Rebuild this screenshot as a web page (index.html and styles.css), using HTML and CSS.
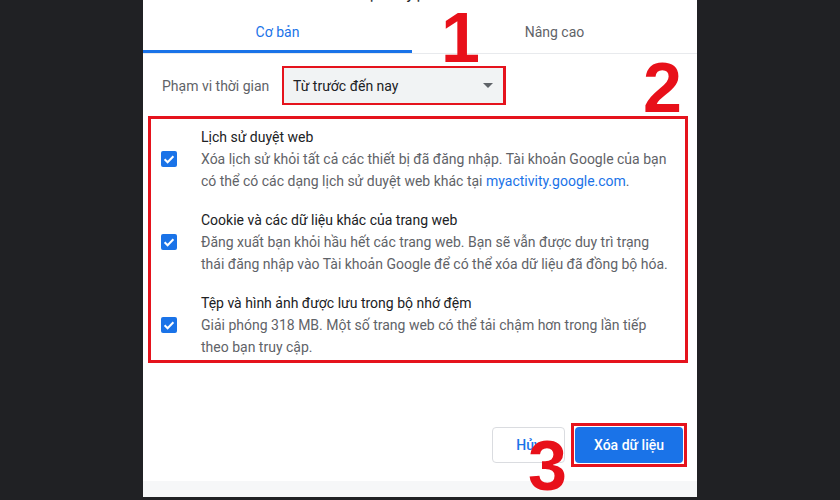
FILE: index.html
```html
<!DOCTYPE html>
<html lang="vi">
<head>
<meta charset="utf-8">
<title>Xóa dữ liệu duyệt web</title>
<link rel="stylesheet" href="styles.css">
</head>
<body>
<div class="dialog">
  <div class="title">Xóa dữ liệu duyệt web</div>
  <div class="tabs">
    <div class="tab tab-active">Cơ bản</div>
    <div class="tab">Nâng cao</div>
  </div>
  <div class="time-row">
    <span class="time-label">Phạm vi thời gian</span>
    <div class="hl hl-select">
      <div class="select">
        <span>Từ trước đến nay</span>
        <span class="caret"></span>
      </div>
    </div>
  </div>
  <div class="hl hl-list">
    <div class="item">
      <span class="cb"><svg viewBox="0 0 16 16" width="16" height="16"><path d="M3.6 8.2l3 3 5.8-6" fill="none" stroke="#fff" stroke-width="2"/></svg></span>
      <div class="item-text">
        <div class="item-title">Lịch sử duyệt web</div>
        <div class="item-desc">Xóa lịch sử khỏi tất cả các thiết bị đã đăng nhập. Tài khoản Google của bạn<br>có thể có các dạng lịch sử duyệt web khác tại <span class="link">myactivity.google.com</span>.</div>
      </div>
    </div>
    <div class="item">
      <span class="cb"><svg viewBox="0 0 16 16" width="16" height="16"><path d="M3.6 8.2l3 3 5.8-6" fill="none" stroke="#fff" stroke-width="2"/></svg></span>
      <div class="item-text">
        <div class="item-title">Cookie và các dữ liệu khác của trang web</div>
        <div class="item-desc">Đăng xuất bạn khỏi hầu hết các trang web. Bạn sẽ vẫn được duy trì trạng<br>thái đăng nhập vào Tài khoản Google để có thể xóa dữ liệu đã đồng bộ hóa.</div>
      </div>
    </div>
    <div class="item">
      <span class="cb"><svg viewBox="0 0 16 16" width="16" height="16"><path d="M3.6 8.2l3 3 5.8-6" fill="none" stroke="#fff" stroke-width="2"/></svg></span>
      <div class="item-text">
        <div class="item-title">Tệp và hình ảnh được lưu trong bộ nhớ đệm</div>
        <div class="item-desc">Giải phóng 318 MB. Một số trang web có thể tải chậm hơn trong lần tiếp<br>theo bạn truy cập.</div>
      </div>
    </div>
  </div>
  <div class="actions">
    <button class="btn btn-cancel">Hủy</button>
    <div class="hl hl-btn">
      <button class="btn btn-primary">Xóa dữ liệu</button>
    </div>
  </div>
  <div class="footer"></div>
</div>
<div class="num num-1">1</div>
<div class="num num-2">2</div>
<div class="num num-3">3</div>
</body>
</html>
```
FILE: styles.css
```css
html, body {
  margin: 0;
  padding: 0;
}
body {
  width: 840px;
  height: 500px;
  background: #202124;
  overflow: hidden;
  position: relative;
  font-family: Roboto, "Noto Sans", Arial, sans-serif;
  font-size: 14px;
  color: #202124;
}
.dialog {
  width: 554px;
  height: 497px;
  margin-left: 143px;
  background: #fff;
  display: flex;
  flex-direction: column;
  overflow: hidden;
}
.title {
  margin-top: -16px;
  height: 20px;
  line-height: 20px;
  padding-left: 162px;
  font-size: 16px;
  color: #202124;
  flex-shrink: 0;
}
.tabs {
  margin-top: 9px;
  display: flex;
  height: 40px;
  border-bottom: 1px solid #e8eaed;
  flex-shrink: 0;
}
.tab {
  display: flex;
  align-items: center;
  justify-content: center;
  flex: 1;
  color: #5f6368;
  font-weight: 400;
  box-sizing: border-box;
  padding-bottom: 3px;
}
.tab-active {
  flex: 0 0 269px;
  color: #1a73e8;
  border-bottom: 3px solid #1a73e8;
  padding-bottom: 0;
}
.time-row {
  display: flex;
  align-items: center;
  margin-top: 12px;
  padding-left: 19px;
  flex-shrink: 0;
}
.time-label {
  color: #5f6368;
  width: 120px;
}
.hl {
  border: 3px solid #e5131d;
}
.hl-select {
  border-width: 2px 3px 2px 2px;
}
.select {
  width: 219px;
  height: 35px;
  background: #f1f3f4;
  display: flex;
  align-items: center;
  justify-content: space-between;
  padding: 0 10px 0 9px;
  box-sizing: border-box;
  color: #202124;
}
.caret {
  width: 0;
  height: 0;
  border-left: 5px solid transparent;
  border-right: 5px solid transparent;
  border-top: 5px solid #5f6368;
}
.hl-list {
  margin: 11px 9px 0 5px;
  padding: 7px 10px 2px 10px;
  display: flex;
  flex-direction: column;
  gap: 17px;
  flex-shrink: 0;
}
.item {
  display: flex;
  align-items: center;
  gap: 24px;
  line-height: 22px;
}
.cb {
  width: 16px;
  height: 16px;
  background: #1a73e8;
  border-radius: 2px;
  flex-shrink: 0;
  display: block;
}
.cb svg {
  display: block;
}
.item-title {
  color: #202124;
}
.item-desc {
  color: #5f6368;
  white-space: nowrap;
}
.link {
  color: #1a73e8;
}
.actions {
  display: flex;
  justify-content: flex-end;
  align-items: center;
  gap: 6px;
  margin-top: 60px;
  padding-right: 10px;
  flex-shrink: 0;
}
.hl-btn {
  padding: 1px;
}
.btn {
  font-family: Roboto, "Noto Sans", Arial, sans-serif;
  font-size: 14px;
  font-weight: 500;
  height: 36px;
  border-radius: 4px;
  cursor: pointer;
  display: block;
}
.btn-cancel {
  width: 73px;
  background: #fff;
  border: 1px solid #dadce0;
  color: #1a73e8;
}
.btn-primary {
  width: 108px;
  background: #1a73e8;
  border: none;
  color: #fff;
}
.footer {
  margin-top: auto;
  height: 16px;
  background: #f6f7f8;
  flex-shrink: 0;
}
.num {
  position: absolute;
  font-family: "Liberation Sans", Arial, sans-serif;
  font-weight: 700;
  font-size: 70px;
  line-height: 70px;
  color: #e8101a;
}
.num-1 { left: 441px; top: 3px; }
.num-2 { left: 643px; top: 53px; }
.num-3 { left: 528px; top: 431px; }
```
